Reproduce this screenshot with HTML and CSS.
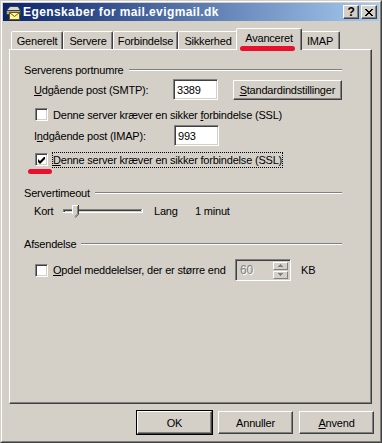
FILE: index.html
```html
<!DOCTYPE html>
<html lang="da">
<head>
    <meta charset="UTF-8">
    <meta name="viewport" content="width=device-width, initial-scale=1.0">
    <title>Egenskaber for mail.evigmail.dk</title>
    <link rel="stylesheet" href="styles.css">
</head>
<body>
<div class="window">
  <div class="frame">
    <div class="titlebar">
      <svg class="app-icon" width="16" height="16" viewBox="0 0 16 16">
        <path d="M1.5 6.5 L5 2.5 H13 L15.5 6.5 Z" fill="#d8d8d8" stroke="#404040"/>
        <rect x="1.5" y="6.5" width="14" height="4" fill="#a8a8a8" stroke="#404040"/>
        <rect x="4.5" y="8.5" width="10" height="7" fill="#fff6a0" stroke="#6b5a00"/>
        <path d="M4.5 8.5 L9.5 12.5 L14.5 8.5" fill="none" stroke="#6b5a00"/>
      </svg>
      <span class="title">Egenskaber for mail.evigmail.dk</span>
      <div class="caption-buttons">
        <span class="cap-btn help">?</span>
        <span class="cap-btn">
          <svg width="8" height="7" viewBox="0 0 8 7">
            <path d="M0 0 L7 7 M1 0 L8 7 M7 0 L0 7 M8 0 L1 7" stroke="#000" stroke-width="1" fill="none"/>
          </svg>
        </span>
      </div>
    </div>

    <div class="tabs">
      <div class="tab tab-general">Generelt</div>
      <div class="tab tab-servers">Servere</div>
      <div class="tab tab-connection">Forbindelse</div>
      <div class="tab tab-security">Sikkerhed</div>
      <div class="tab tab-advanced active">Avanceret<span class="mark tab-mark"></span></div>
      <div class="tab tab-imap">IMAP</div>
    </div>

    <div class="panel">
      <div class="group-head"><span>Serverens portnumre</span><span class="rule"></span></div>

      <div class="field-row smtp-row">
        <span class="field-label"><u>U</u>dgående post (SMTP):</span>
        <div class="edit">3389</div>
        <div class="btn std-btn"><u>S</u>tandardindstillinger</div>
      </div>

      <div class="check-row cb-smtp">
        <span class="checkbox"></span>
        <span>Denne server kræver en sikker <u>f</u>orbindelse (SSL)</span>
      </div>

      <div class="field-row imap-row">
        <span class="field-label">I<u>n</u>dgående post (IMAP):</span>
        <div class="edit">993</div>
      </div>

      <div class="check-row cb-imap">
        <span class="checkbox checked">
          <svg width="7" height="7" viewBox="0 0 7 7"><path d="M0 2 L0 5 L2 7 L7 2 L7 -1 L2 4 Z" fill="#000"/></svg>
          <span class="mark cb-mark"></span>
        </span>
        <span class="focus"><u>D</u>enne server kræver en sikker forbindelse (SSL)</span>
      </div>

      <div class="group-head head-timeout"><span>Servertimeout</span><span class="rule"></span></div>

      <div class="slider-row">
        <span class="slider-min">Kort</span>
        <svg class="slider" width="84" height="19" viewBox="0 0 84 19">
          <rect x="2" y="8" width="80" height="1" fill="#808080"/>
          <rect x="2" y="8" width="1" height="4" fill="#808080"/>
          <rect x="3" y="9" width="78" height="1" fill="#404040"/>
          <rect x="3" y="9" width="1" height="2" fill="#404040"/>
          <rect x="2" y="11" width="80" height="1" fill="#fff"/>
          <rect x="81" y="8" width="1" height="4" fill="#fff"/>
          <rect x="80" y="9" width="1" height="2" fill="#d4d0c8"/>
          <path d="M11 4 H17 V13 L14 16 L11 13 Z" fill="#d4d0c8"/>
          <path d="M11.5 13 V4.5 H17" fill="none" stroke="#fff"/>
          <path d="M17.5 4 V13.2 L14.2 16.5" fill="none" stroke="#404040"/>
          <path d="M16.5 5 V12.8 L14 15.3" fill="none" stroke="#808080"/>
        </svg>
        <span class="slider-max">Lang</span>
        <span>1 minut</span>
      </div>

      <div class="group-head head-send"><span>Afsendelse</span><span class="rule"></span></div>

      <div class="check-row spin-row">
        <span class="checkbox"></span>
        <span class="split-label"><u>O</u>pdel meddelelser, der er større end</span>
        <div class="spin">
          <span class="spin-value">60</span>
          <div class="spin-buttons">
            <span class="spin-btn"><svg width="5" height="3" viewBox="0 0 5 3"><path d="M2 0 H3 V1 H4 V2 H5 V3 H0 V2 H1 V1 H2 Z" fill="#808080"/></svg></span>
            <span class="spin-btn"><svg width="5" height="3" viewBox="0 0 5 3"><path d="M0 0 H5 V1 H4 V2 H3 V3 H2 V2 H1 V1 H0 Z" fill="#808080"/></svg></span>
          </div>
        </div>
        <span class="unit">KB</span>
      </div>
    </div>

    <div class="buttons">
      <div class="btn default">OK</div>
      <div class="btn">Annuller</div>
      <div class="btn"><u>A</u>nvend</div>
    </div>
  </div>
</div>
</body>
</html>
```

FILE: styles.css
```css
/* styles.css */
* {
    box-sizing: border-box;
}

body {
    margin: 0;
    background: #d4d0c8;
    font-family: "Liberation Sans", Arial, sans-serif;
    font-size: 11px;
    letter-spacing: -0.2px;
    color: #000;
}

u {
    text-decoration-thickness: 1px;
    text-underline-offset: 1px;
}

.window {
    width: 382px;
    height: 443px;
    border: 1px solid;
    border-color: #d4d0c8 #404040 #404040 #d4d0c8;
}

.frame {
    height: 100%;
    border: 1px solid;
    border-color: #fff #808080 #808080 #fff;
    padding: 1px;
    display: flex;
    flex-direction: column;
}

/* title bar */
.titlebar {
    height: 18px;
    display: flex;
    align-items: center;
    padding: 0 2px;
    background: linear-gradient(to right, #0a246a, #a6caf0);
    color: #fff;
}

.app-icon {
    margin-right: 2px;
}

.title {
    font-weight: bold;
    font-size: 12px;
    letter-spacing: 0.4px;
}

.caption-buttons {
    margin-left: auto;
    display: flex;
    gap: 2px;
}

.cap-btn {
    width: 16px;
    height: 14px;
    background: #d4d0c8;
    border: 1px solid;
    border-color: #fff #404040 #404040 #fff;
    box-shadow: inset -1px -1px #808080;
    color: #000;
    display: flex;
    align-items: center;
    justify-content: center;
    font-weight: bold;
    font-size: 12px;
}

/* tabs */
.tabs {
    display: flex;
    align-items: flex-end;
    height: 21px;
    margin: 7px 0 0 8px;
}

.tab {
    height: 18px;
    border: 1px solid;
    border-bottom: none;
    border-color: #fff #404040 transparent #fff;
    box-shadow: inset -1px 0 #808080;
    border-radius: 2px 2px 0 0;
    display: flex;
    align-items: center;
    justify-content: center;
    background: #d4d0c8;
}

.tab-general { width: 52px; }
.tab-servers { width: 50px; }
.tab-connection { width: 65px; }
.tab-security { width: 60px; }
.tab-imap { width: 40px; }

.tab.active {
    width: 66px;
    height: 22px;
    margin: 0 -2px -1px;
    padding-bottom: 3px;
    position: relative;
    z-index: 1;
}

.mark {
    position: absolute;
    height: 5px;
    border-radius: 3px;
    background: #e8102c;
}

.tab-mark {
    left: 3px;
    top: 17px;
    width: 55px;
}

/* panel */
.panel {
    margin-left: 6px;
    width: 363px;
    height: 355px;
    border: 1px solid;
    border-color: #fff #404040 #404040 #fff;
    box-shadow: inset -1px -1px #808080;
    padding: 13px 29px 0 14px;
    display: flex;
    flex-direction: column;
}

.group-head {
    display: flex;
    align-items: center;
    height: 13px;
}

.group-head .rule {
    flex: 1;
    margin-left: 5px;
    border-top: 1px solid #808080;
    border-bottom: 1px solid #fff;
}

.head-timeout {
    margin-top: 20px;
}

.head-send {
    margin-top: 17px;
}

.field-row {
    display: flex;
    align-items: center;
    height: 21px;
    padding-left: 10px;
}

.smtp-row {
    margin-top: 3px;
}

.imap-row {
    margin-top: 4px;
}

.field-label {
    width: 140px;
}

.edit {
    width: 45px;
    height: 21px;
    background: #fff;
    border: 1px solid;
    border-color: #808080 #fff #fff #808080;
    box-shadow: inset 1px 1px #404040, inset -1px -1px #d4d0c8;
    padding: 0 3px;
    display: flex;
    align-items: center;
}

.btn {
    width: 75px;
    height: 23px;
    background: #d4d0c8;
    border: 1px solid;
    border-color: #fff #404040 #404040 #fff;
    box-shadow: inset -1px -1px #808080;
    display: flex;
    align-items: center;
    justify-content: center;
}

.std-btn {
    width: 110px;
    height: 20px;
    margin-left: 15px;
}

.btn.default {
    outline: 1px solid #000;
    outline-offset: 0;
}

.check-row {
    display: flex;
    align-items: center;
    height: 13px;
    padding-left: 11px;
    gap: 5px;
}

.cb-smtp {
    margin-top: 8px;
}

.cb-imap {
    margin-top: 7px;
}

.checkbox {
    position: relative;
    width: 13px;
    height: 13px;
    flex: none;
    background: #fff;
    border: 1px solid;
    border-color: #808080 #fff #fff #808080;
    box-shadow: inset 1px 1px #404040, inset -1px -1px #d4d0c8;
    display: flex;
    align-items: center;
    justify-content: center;
}

.checkbox svg {
    margin-top: 1px;
}

.cb-mark {
    left: -8px;
    top: 15px;
    width: 24px;
}

.focus {
    border: 1px dotted #000;
    padding: 1px 0;
    line-height: 12px;
    margin-left: -1px;
}

.slider-row {
    display: flex;
    align-items: center;
    height: 19px;
    margin-top: 2px;
    padding-left: 10px;
}

.slider-min {
    width: 27px;
}

.slider-max {
    width: 41px;
    margin-left: 9px;
}

.spin-row {
    height: 22px;
    margin-top: 9px;
}

.split-label {
    width: 177px;
}

.spin {
    width: 56px;
    height: 22px;
    border: 1px solid;
    border-color: #808080 #fff #fff #808080;
    box-shadow: inset 1px 1px #404040, inset -1px -1px #d4d0c8;
    display: flex;
    align-items: center;
    padding: 2px 2px 2px 4px;
    font-size: 12px;
}

.spin-value {
    flex: 1;
    color: #808080;
    text-shadow: 1px 1px #fff;
}

.spin-buttons {
    display: flex;
    flex-direction: column;
    gap: 1px;
    width: 15px;
    height: 17px;
}

.spin-btn {
    flex: 1;
    border: 1px solid;
    border-color: #fff #808080 #808080 #fff;
    display: flex;
    align-items: center;
    justify-content: center;
}

.unit {
    margin-left: 5px;
}

/* dialog buttons */
.buttons {
    display: flex;
    justify-content: flex-end;
    gap: 6px;
    margin-top: 7px;
    padding-right: 5px;
}
```
